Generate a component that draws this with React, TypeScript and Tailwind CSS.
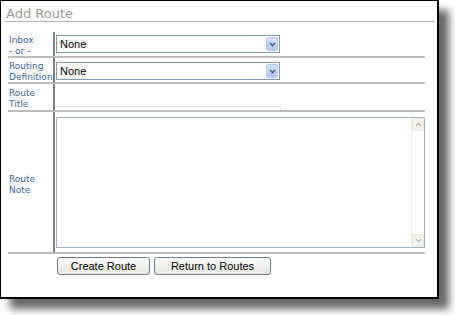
const rows = [
  { label: ["Inbox", "- or -"], kind: "select", height: "h-[26px]", pad: "pt-[3px]", top: "mt-[3px]" },
  { label: ["Routing", "Definition"], kind: "select", height: "h-[26px]", pad: "pt-[3px]", top: "mt-[4px]" },
  { label: ["Route", "Title"], kind: "text", height: "h-[28px]", pad: "pt-[4px]", top: "mt-[3px]" },
  { label: ["Route", "Note"], kind: "note", height: "h-[142px]", pad: "pt-[62px]", top: "mt-[5px]" },
];

const Chevron = ({ color, up }: { color: string; up?: boolean }) => (
  <svg width="7" height="5" viewBox="0 0 7 5">
    <path d={up ? "M1 4 L3.5 1.5 L6 4" : "M1 1 L3.5 3.5 L6 1"} fill="none" stroke={color} strokeWidth="1.6" />
  </svg>
);

const SelectBox = ({ top }: { top: string }) => (
  <div className={`${top} flex h-[18px] w-[224px] border border-[#7f9db9] bg-white`}>
    <select className="flex-1 appearance-none bg-transparent pl-[3px] text-[11px] leading-[16px] text-black outline-none [font-family:'Liberation_Sans',Arial,sans-serif]">
      <option>None</option>
    </select>
    <div className="m-[1px] flex w-[12px] items-center justify-center rounded-[2px] border border-[#b9c9ef] bg-gradient-to-b from-[#d6e1fc] to-[#b4c7f5]">
      <Chevron color="#4d6185" />
    </div>
  </div>
);

const NoteBox = ({ top }: { top: string }) => (
  <div className={`${top} flex h-[131px] w-[369px] border border-[#9fb0c4] bg-white`}>
    <textarea className="flex-1 resize-none border-0 outline-none" />
    <div className="flex w-[13px] flex-col justify-between border-l border-[#efefe8] bg-[#fcfcf8]">
      <div className="flex h-[13px] items-center justify-center rounded-[2px] border border-[#ebe9de] bg-[#f4f3ec]">
        <Chevron color="#c4c2b8" up />
      </div>
      <div className="flex h-[13px] items-center justify-center rounded-[2px] border border-[#ebe9de] bg-[#f4f3ec]">
        <Chevron color="#c4c2b8" />
      </div>
    </div>
  </div>
);

const btnCls =
  "h-[18px] rounded-[3px] border border-[#6f7f90] bg-gradient-to-b from-[#fdfdfd] to-[#e6e6df] text-[11px] leading-[15px] text-black [font-family:'Liberation_Sans',Arial,sans-serif]";

const App = () => {
  return (
    <div className="h-[315px] w-[455px] bg-white">
      <div className="h-[299px] w-[439px] border-t border-l border-r-2 border-b-2 border-black bg-white shadow-[10px_10px_8px_rgba(0,0,0,0.6)]">
        {/* Title */}
        <div className="ml-[4px] w-[430px] border-b border-[#b4b4b4] pl-[1px] pt-[5px] text-[13px] leading-[15px] text-[#9c9c9c] [font-family:'DejaVu_Sans',Verdana,sans-serif]">
          Add Route
        </div>

        {/* Form rows */}
        <div className="ml-[7px] mt-[10px] w-[417px]">
          {rows.map((row, i) => (
            <div key={i} className={`flex ${row.height} border-b-2 border-[#bcbcbc]`}>
              <div
                className={`w-[47px] shrink-0 border-r-2 border-[#7d7d7d] pl-[1px] ${row.pad} text-[9px] leading-[11px] text-[#38689a] [font-family:'DejaVu_Sans',Verdana,sans-serif]`}
              >
                {row.label.map((line) => (
                  <div key={line}>{line}</div>
                ))}
              </div>
              <div className="flex-1 pl-[1px]">
                {row.kind === "select" && <SelectBox top={row.top} />}
                {row.kind === "text" && (
                  <input className="mt-[3px] h-[20px] w-[225px] border-0 border-b border-dotted border-[#c4c4c4] outline-none" />
                )}
                {row.kind === "note" && <NoteBox top={row.top} />}
              </div>
            </div>
          ))}
        </div>

        {/* Buttons */}
        <div className="ml-[56px] mt-[3px] flex gap-[4px]">
          <button className={`${btnCls} w-[93px]`}>Create Route</button>
          <button className={`${btnCls} w-[117px]`}>Return to Routes</button>
        </div>
      </div>
    </div>
  );
};

export default App;
